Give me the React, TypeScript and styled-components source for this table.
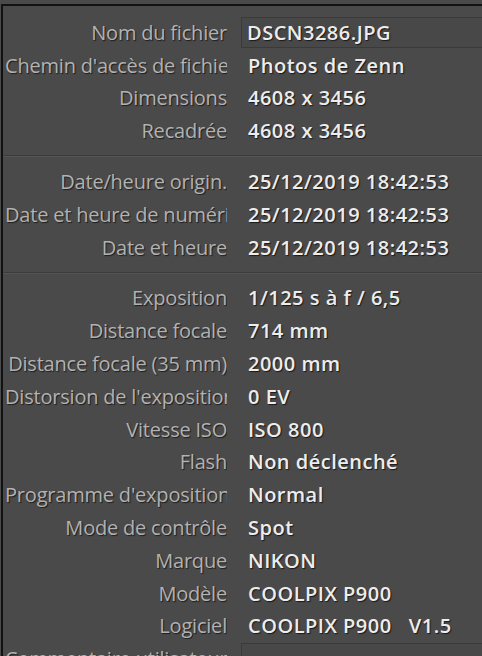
import React from "react";
import styled, { createGlobalStyle } from "styled-components";

interface Field {
  label: string;
  value?: string;
  boxed?: boolean;
}

const sections: Field[][] = [
  [
    { label: "Nom du fichier", value: "DSCN3286.JPG", boxed: true },
    { label: "Chemin d'accès de fichier", value: "Photos de Zenn" },
    { label: "Dimensions", value: "4608 x 3456" },
    { label: "Recadrée", value: "4608 x 3456" },
  ],
  [
    { label: "Date/heure origin.", value: "25/12/2019 18:42:53" },
    { label: "Date et heure de numérisation", value: "25/12/2019 18:42:53" },
    { label: "Date et heure", value: "25/12/2019 18:42:53" },
  ],
  [
    { label: "Exposition", value: "1/125 s à f / 6,5" },
    { label: "Distance focale", value: "714 mm" },
    { label: "Distance focale (35 mm)", value: "2000 mm" },
    { label: "Distorsion de l'exposition", value: "0 EV" },
    { label: "Vitesse ISO", value: "ISO 800" },
    { label: "Flash", value: "Non déclenché" },
    { label: "Programme d'exposition", value: "Normal" },
    { label: "Mode de contrôle", value: "Spot" },
    { label: "Marque", value: "NIKON" },
    { label: "Modèle", value: "COOLPIX P900" },
    { label: "Logiciel", value: "COOLPIX P900   V1.5" },
    { label: "Commentaire utilisateur", value: "", boxed: true },
  ],
];

const GlobalStyle = createGlobalStyle`
  html, body {
    margin: 0;
    padding: 0;
    background: #4a4a4a;
    overflow: hidden;
  }
`;

const Frame = styled.div`
  width: 482px;
  height: 656px;
  box-sizing: border-box;
  padding-top: 4px;
  overflow: hidden;
  background: #4a4a4a;
`;

const Panel = styled.div`
  margin-left: 1px;
  height: 100%;
  border-top: 2px solid #121212;
  border-left: 2px solid #121212;
  background: #4a4a4a;
  font-family: "Open Sans", "DejaVu Sans", sans-serif;
  font-size: 20px;
`;

const Section = styled.div<{ $first?: boolean }>`
  padding: ${(p) => (p.$first ? "10px" : "9px")} 0 8px;
  border-top: ${(p) => (p.$first ? "none" : "1px solid #3b3b3b")};
  box-shadow: ${(p) => (p.$first ? "none" : "inset 0 1px 0 #555555")};
`;

const Row = styled.div`
  display: grid;
  grid-template-columns: 224px 1fr;
  column-gap: 14px;
  height: 32.8px;
  align-items: center;
`;

const Label = styled.div`
  padding-left: 2px;
  white-space: nowrap;
  overflow: hidden;
  text-align: right;
  letter-spacing: -0.2px;
  color: #b2b2b2;
  text-shadow: 1px 1px 1px #1e1e1e;
`;

const Value = styled.div<{ $boxed?: boolean }>`
  white-space: pre;
  font-weight: 600;
  letter-spacing: 0.5px;
  color: #ededed;
  text-shadow: 1px 1px 1px #1a1a1a;
  box-sizing: border-box;
  height: ${(p) => (p.$boxed ? "31px" : "auto")};
  line-height: ${(p) => (p.$boxed ? "29px" : "normal")};
  padding-left: ${(p) => (p.$boxed ? "5px" : "6px")};
  margin-right: -4px;
  background: ${(p) => (p.$boxed ? "#484848" : "transparent")};
  border: 1px solid ${(p) => (p.$boxed ? "#3a3a3a" : "transparent")};
  border-right: none;
`;

export default function App() {
  return (
    <Frame>
      <GlobalStyle />
      <Panel>
        {sections.map((fields, i) => (
          <Section key={i} $first={i === 0}>
            {fields.map((f) => (
              <Row key={f.label}>
                <Label>{f.label}</Label>
                <Value $boxed={f.boxed}>{f.value}</Value>
              </Row>
            ))}
          </Section>
        ))}
      </Panel>
    </Frame>
  );
}
